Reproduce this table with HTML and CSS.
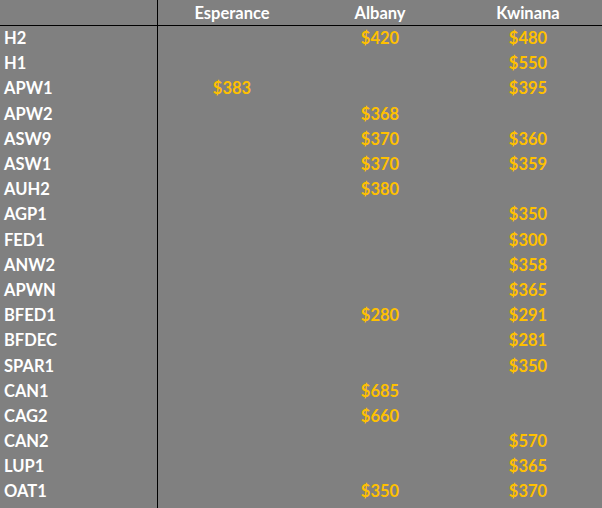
FILE: index.html
```html
<!DOCTYPE html>
<html>
<head>
<meta charset="utf-8">
<link rel="stylesheet" href="styles.css">
</head>
<body>
<div class="sheet">
  <div class="row head">
    <div class="label"></div>
    <div class="cell">Esperance</div>
    <div class="cell">Albany</div>
    <div class="cell">Kwinana</div>
  </div>
  <div class="row"><div class="label">H2</div><div class="cell"></div><div class="cell">$420</div><div class="cell">$480</div></div>
  <div class="row"><div class="label">H1</div><div class="cell"></div><div class="cell"></div><div class="cell">$550</div></div>
  <div class="row"><div class="label">APW1</div><div class="cell">$383</div><div class="cell"></div><div class="cell">$395</div></div>
  <div class="row"><div class="label">APW2</div><div class="cell"></div><div class="cell">$368</div><div class="cell"></div></div>
  <div class="row"><div class="label">ASW9</div><div class="cell"></div><div class="cell">$370</div><div class="cell">$360</div></div>
  <div class="row"><div class="label">ASW1</div><div class="cell"></div><div class="cell">$370</div><div class="cell">$359</div></div>
  <div class="row"><div class="label">AUH2</div><div class="cell"></div><div class="cell">$380</div><div class="cell"></div></div>
  <div class="row"><div class="label">AGP1</div><div class="cell"></div><div class="cell"></div><div class="cell">$350</div></div>
  <div class="row"><div class="label">FED1</div><div class="cell"></div><div class="cell"></div><div class="cell">$300</div></div>
  <div class="row"><div class="label">ANW2</div><div class="cell"></div><div class="cell"></div><div class="cell">$358</div></div>
  <div class="row"><div class="label">APWN</div><div class="cell"></div><div class="cell"></div><div class="cell">$365</div></div>
  <div class="row"><div class="label">BFED1</div><div class="cell"></div><div class="cell">$280</div><div class="cell">$291</div></div>
  <div class="row"><div class="label">BFDEC</div><div class="cell"></div><div class="cell"></div><div class="cell">$281</div></div>
  <div class="row"><div class="label">SPAR1</div><div class="cell"></div><div class="cell"></div><div class="cell">$350</div></div>
  <div class="row"><div class="label">CAN1</div><div class="cell"></div><div class="cell">$685</div><div class="cell"></div></div>
  <div class="row"><div class="label">CAG2</div><div class="cell"></div><div class="cell">$660</div><div class="cell"></div></div>
  <div class="row"><div class="label">CAN2</div><div class="cell"></div><div class="cell"></div><div class="cell">$570</div></div>
  <div class="row"><div class="label">LUP1</div><div class="cell"></div><div class="cell"></div><div class="cell">$365</div></div>
  <div class="row"><div class="label">OAT1</div><div class="cell"></div><div class="cell">$350</div><div class="cell">$370</div></div>
</div>
</body>
</html>
```
FILE: styles.css
```css
html, body {
  margin: 0;
  padding: 0;
  background: #808080;
}
.sheet {
  width: 602px;
  height: 508px;
  overflow: hidden;
  background: linear-gradient(#000, #000) 157px 0 / 1px 100% no-repeat, #808080;
  font-family: Lato, "Open Sans", sans-serif;
  font-weight: 700;
  font-size: 16.5px;
  color: #FFC000;
}
.row {
  display: grid;
  grid-template-columns: 158px 148px 148px 148px;
  height: 25.2px;
  align-items: center;
}
.row.head {
  height: 25px;
  border-bottom: 1px solid #000;
  color: #fff;
}
.label {
  padding-left: 4px;
  color: #fff;
  margin-top: -1px;
}
.cell {
  text-align: center;
  margin-top: -1px;
}
.head .cell {
  margin-top: 0;
}
```
